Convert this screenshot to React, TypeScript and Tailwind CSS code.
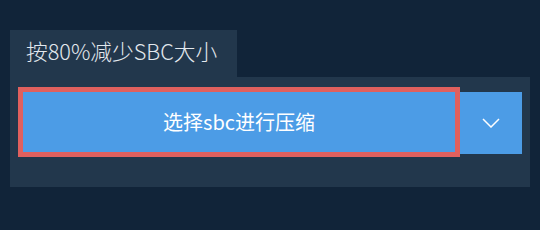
const FONT = "font-['Noto_Sans_CJK_SC','Noto_Sans',sans-serif]";

export default function App() {
  return (
    <div className={`h-[230px] w-[540px] bg-[#112439] pt-[30px] pl-[10px] ${FONT}`}>
      {/* Tab header */}
      <div className="flex">
        <div className="flex h-[47px] items-center bg-[#22374c] pl-4 pr-5 pb-[4px] text-[21.7px] font-light text-[#e3e8ee]">
          按80%减少SBC大小
        </div>
      </div>

      {/* Panel */}
      <div className="flex w-[520px] bg-[#22374c] px-2 pt-[10px] pb-[30px]">
        <button className="flex h-[70px] w-[442px] items-center justify-center border-[5px] border-[#e0605e] bg-[#4c9ce6] text-[20px] text-white">
          选择sbc进行压缩
        </button>
        <button className="mt-[5px] flex h-[62px] w-[62px] items-center justify-center bg-[#4c9ce6] text-white">
          <svg width="18" height="10" viewBox="0 0 18 10" fill="none" stroke="currentColor" strokeWidth="1.5">
            <polyline points="1,1 9,9 17,1" />
          </svg>
        </button>
      </div>
    </div>
  );
}
